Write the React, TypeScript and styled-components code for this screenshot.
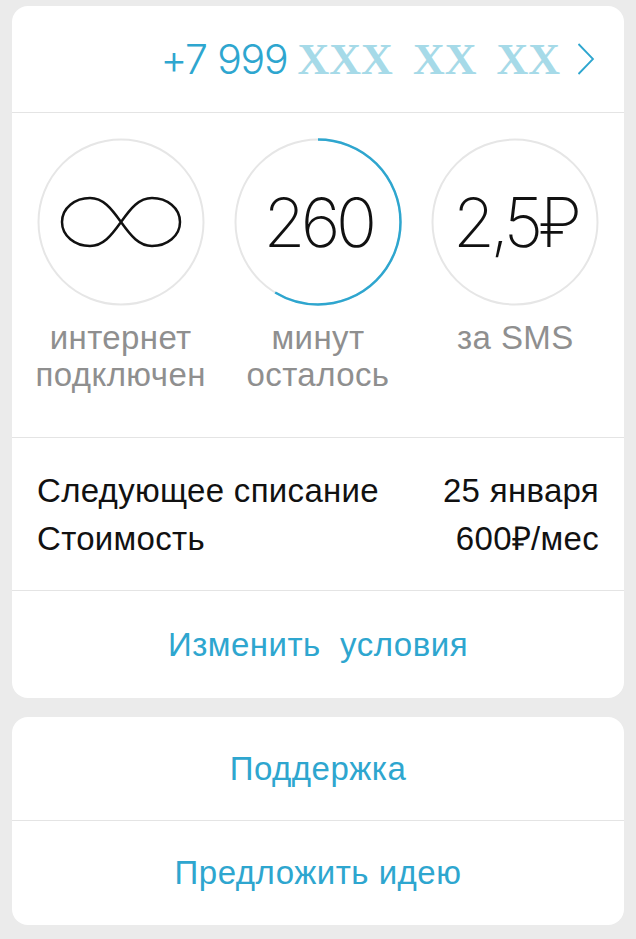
import styled, { createGlobalStyle } from 'styled-components';

const GlobalStyle = createGlobalStyle`
  html, body {
    margin: 0;
    padding: 0;
    background: #ebebeb;
  }
  body {
    font-family: "Liberation Sans", Arial, sans-serif;
  }
`;

const BLUE = '#2ea6cf';

const Page = styled.div`
  width: 636px;
  box-sizing: border-box;
  padding: 6px 12px 14px;
  display: flex;
  flex-direction: column;
  gap: 19px;
`;

const Card = styled.div`
  background: #fff;
  border-radius: 16px;
  overflow: hidden;
`;

const PhoneRow = styled.div`
  height: 106px;
  display: flex;
  align-items: center;
  justify-content: flex-end;
  padding-right: 29px;
  border-bottom: 1px solid #e4e4e4;
`;

const PhonePrefix = styled.span`
  font-family: Inter, "Liberation Sans", sans-serif;
  font-weight: 300;
  font-size: 41px;
  letter-spacing: -1.2px;
  color: ${BLUE};
`;

const PhoneHidden = styled.span`
  font-family: "Liberation Serif", "Times New Roman", serif;
  font-weight: 700;
  font-size: 44px;
  color: #a6dae8;
  margin-left: 10px;
  word-spacing: 9px;
`;

const Chevron = styled.svg`
  margin-left: 17px;
  flex-shrink: 0;
`;

const Stats = styled.div`
  display: grid;
  grid-template-columns: repeat(3, 1fr);
  padding: 25px 10px 44px;
  border-bottom: 1px solid #e4e4e4;
`;

const Stat = styled.div`
  display: flex;
  flex-direction: column;
  align-items: center;
`;

const Ring = styled.div`
  position: relative;
  width: 168px;
  height: 168px;
  display: flex;
  align-items: center;
  justify-content: center;
`;

const RingSvg = styled.svg`
  position: absolute;
  inset: 0;
`;

const InfinityMark = styled.svg`
  position: relative;
`;

const BigValue = styled.span`
  position: relative;
  font-family: Inter, "Liberation Sans", sans-serif;
  font-weight: 200;
  font-size: 68px;
  letter-spacing: -4.5px;
  color: #111;
  line-height: 1;
`;

const StatLabel = styled.div`
  margin-top: 13px;
  font-size: 33px;
  letter-spacing: 0.4px;
  line-height: 37px;
  color: #8f8f8f;
  text-align: center;
  white-space: nowrap;
`;

const Info = styled.div`
  padding: 29px 25px 27px;
  border-bottom: 1px solid #e4e4e4;
`;

const InfoRow = styled.div`
  display: flex;
  justify-content: space-between;
  font-size: 33px;
  letter-spacing: 0.3px;
  line-height: 48px;
  color: #111;
`;

const ActionRow = styled.div<{ $height: number; $divided?: boolean }>`
  height: ${({ $height }) => $height}px;
  display: flex;
  align-items: center;
  justify-content: center;
  font-size: 33px;
  letter-spacing: 0.5px;
  color: ${BLUE};
  white-space: pre;
  border-bottom: ${({ $divided }) => ($divided ? '1px solid #e4e4e4' : 'none')};
`;

const R = 82.5;
const CIRC = 2 * Math.PI * R;

function StatRing({ progress, children }: { progress?: number; children: React.ReactNode }) {
  return (
    <Ring>
      <RingSvg width="168" height="168" viewBox="0 0 168 168">
        <circle cx="84" cy="84" r={R} fill="none" stroke="#e6e6e6" strokeWidth="2" />
        {progress !== undefined && (
          <circle
            cx="84"
            cy="84"
            r={R}
            fill="none"
            stroke={BLUE}
            strokeWidth="2.5"
            strokeDasharray={`${CIRC * progress} ${CIRC}`}
            transform="rotate(-90 84 84)"
          />
        )}
      </RingSvg>
      {children}
    </Ring>
  );
}

export default function App() {
  return (
    <>
      <GlobalStyle />
      <Page>
        <Card>
          <PhoneRow>
            <PhonePrefix>+7 999</PhonePrefix>
            <PhoneHidden>XXX XX XX</PhoneHidden>
            <Chevron width="18" height="34" viewBox="0 0 18 34">
              <polyline points="1.5,2 16,17 1.5,32" fill="none" stroke={BLUE} strokeWidth="1.8" />
            </Chevron>
          </PhoneRow>

          <Stats>
            <Stat>
              <StatRing>
                <InfinityMark width="124" height="56" viewBox="0 0 124 56">
                  <path
                    d="M62 28 C52 14 44 4 31 4 C16 4 3 14 3 28 C3 42 16 52 31 52 C44 52 52 42 62 28 C72 14 80 4 93 4 C108 4 121 14 121 28 C121 42 108 52 93 52 C80 52 72 42 62 28 Z"
                    fill="none"
                    stroke="#111"
                    strokeWidth="2.5"
                  />
                </InfinityMark>
              </StatRing>
              <StatLabel>
                интернет
                <br />
                подключен
              </StatLabel>
            </Stat>
            <Stat>
              <StatRing progress={0.586}>
                <BigValue>260</BigValue>
              </StatRing>
              <StatLabel>
                минут
                <br />
                осталось
              </StatLabel>
            </Stat>
            <Stat>
              <StatRing>
                <BigValue>2,5₽</BigValue>
              </StatRing>
              <StatLabel>за SMS</StatLabel>
            </Stat>
          </Stats>

          <Info>
            <InfoRow>
              <span>Следующее списание</span>
              <span>25 января</span>
            </InfoRow>
            <InfoRow>
              <span>Стоимость</span>
              <span>600₽/мес</span>
            </InfoRow>
          </Info>

          <ActionRow $height={107}>Изменить  условия</ActionRow>
        </Card>

        <Card>
          <ActionRow $height={103} $divided>
            Поддержка
          </ActionRow>
          <ActionRow $height={104}>Предложить идею</ActionRow>
        </Card>
      </Page>
    </>
  );
}
